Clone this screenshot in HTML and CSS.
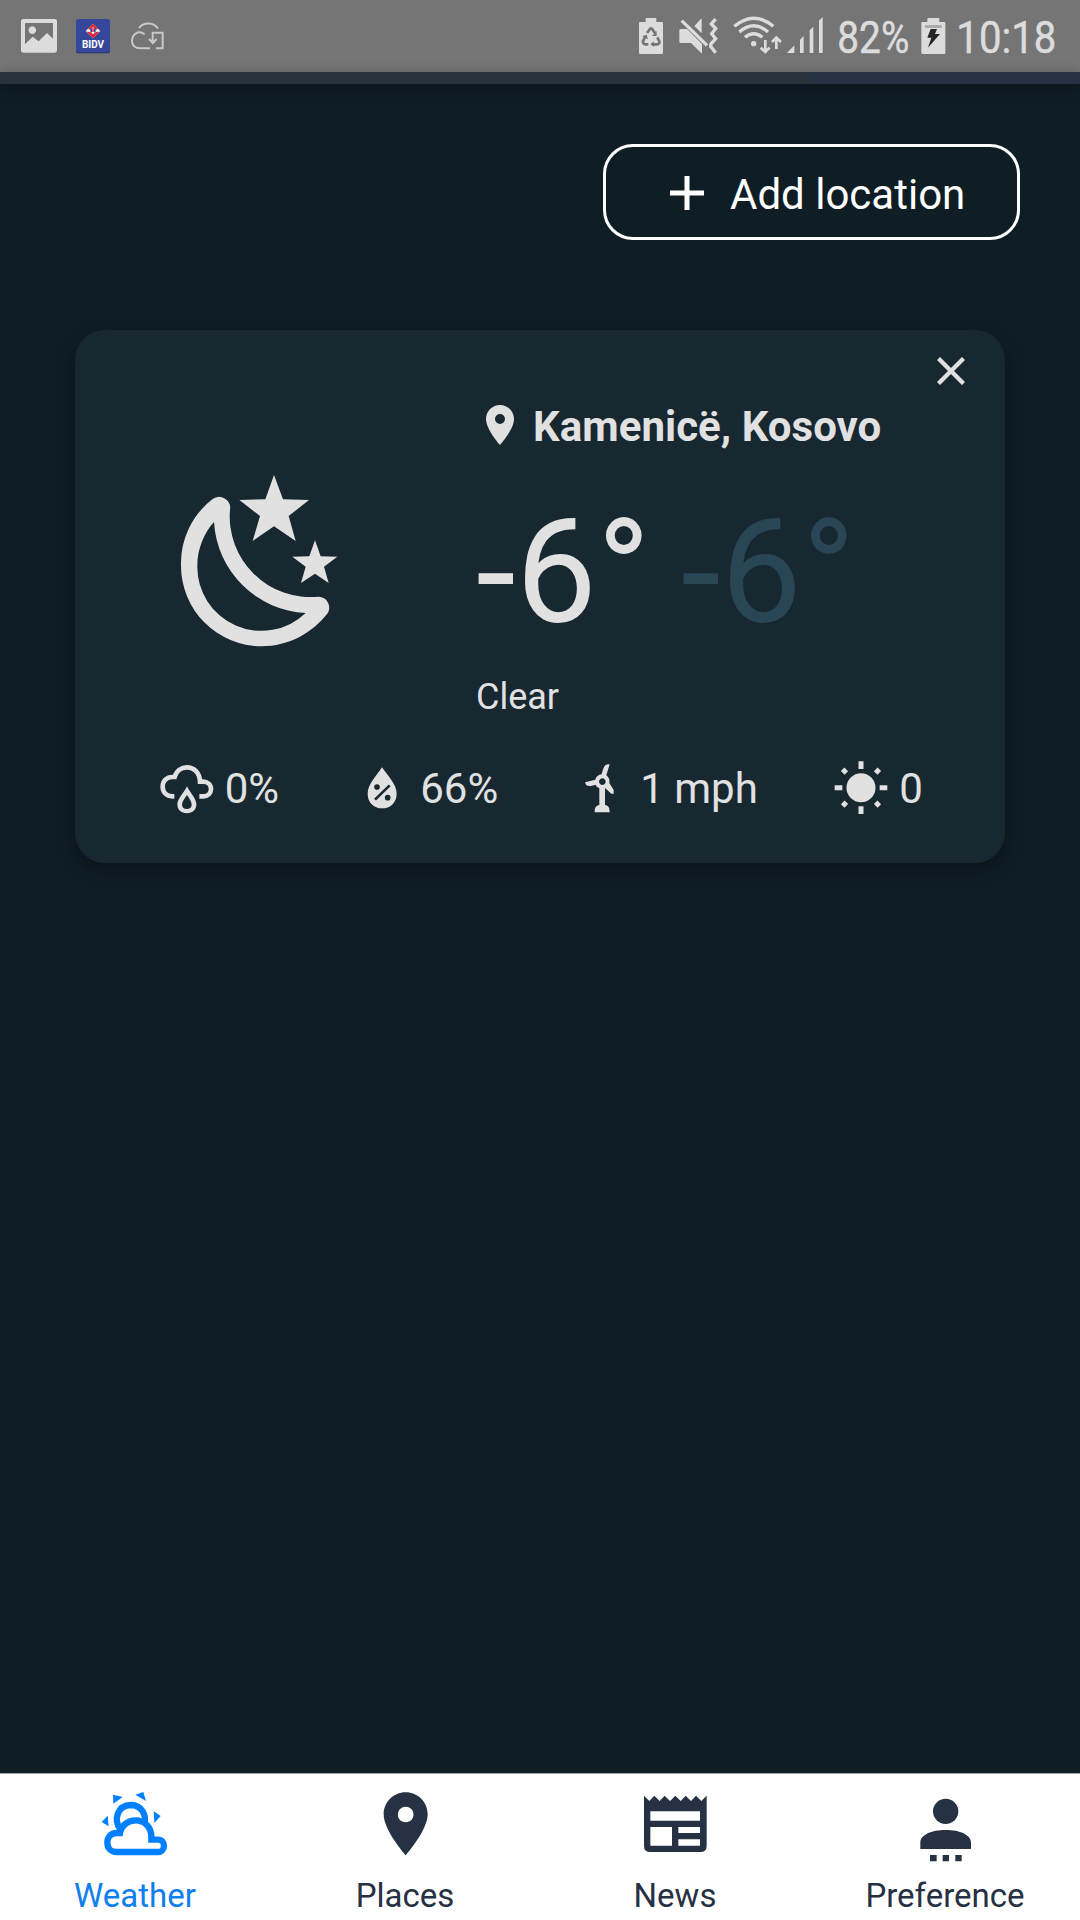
FILE: index.html
```html
<!DOCTYPE html>
<html lang="en">
<head>
<meta charset="utf-8">
<title>Weather</title>
<link rel="stylesheet" href="styles.css">
</head>
<body>
<header class="status">
  <div class="status-left">
    <svg class="st-image" viewBox="63 0 108 216"><path fill-rule="evenodd" d="M70 57H164Q171 57 171 64V151Q171 158 164 158H70Q63 158 63 151V64Q63 57 70 57ZM75 69V133L98 110L116 124L141 99L159 116V69ZM97 79A11.500 11.500 0 1 1 96.900 79Z"/></svg>
    <svg class="st-bidv" viewBox="228 0 102 216"><rect x="228" y="60" width="102" height="100" rx="8" fill="#26336f"/><rect x="228" y="57" width="102" height="100" rx="8" fill="#35479b"/><path d="M279 71L301 93L279 115L257 93Z" fill="#f4e9ee"/><path d="M260 95L270 96L279 103L288 96L298 95L279 115Z" fill="#e0202e"/><path d="M279 71L294 86L288 89L279 80L270 89L264 86Z" fill="#e0202e"/><path d="M271 87L276 84V98L271 95ZM287 87L282 84V98L287 95Z" fill="#35479b"/><rect x="277" y="83" width="4" height="13" fill="#e0202e"/><text class="bidv" x="279" y="145" textLength="66" lengthAdjust="spacingAndGlyphs">BIDV</text></svg>
    <svg class="st-cloud" viewBox="392 0 98 216"><path class="line" d="M416 84C430 66 460 66 473 86M433 103C415 89 395 102 395 123C396 138 406 145 420 145H449M457 128V98H487V145H467M446 117L457.500 129L469 117"/></svg>
  </div>
  <div class="status-right">
    <svg class="st-saver" viewBox="57 0 72 216"><path d="M77 66V57Q77 54 80 54H106Q109 54 109 57V66H126Q129 66 129 69V158Q129 162 125 162H61Q57 162 57 158V69Q57 66 60 66Z"/><path class="recycle" d="M81 99L90 87Q93 84 96 87L106 100M77 108L69 123Q67 131 75 133H85M112 112L118 124Q120 131 112 133H96"/><path class="recycle-tip" d="M110 93V108H96ZM102 124V141L91 133ZM67 109L80 104L84 118Z"/></svg>
    <svg class="st-mute" viewBox="176 0 116 216"><path d="M177 91Q177 87 181 87H200L245 132V160H243L212 129H181Q177 129 177 125ZM244 56V100L222 78L242 56Z"/><path class="slash" d="M184 62L260 136"/><path class="wave" d="M286 57L273 72L286 86L274 101L286 116L272 132L271 139L286 158"/></svg>
    <svg class="st-wifi" viewBox="338 0 146 216"><path class="arc" d="M342 79Q400 30 459 79M357 96Q400 59 443 96M374 112Q400 90 426 112"/><circle cx="400" cy="131" r="8"/><path class="arrow" d="M435 120V154M421 143L435 156L448 143M468 147V114M455 126L468 113L482 126"/></svg>
    <svg class="st-signal" viewBox="502 0 108 216"><path d="M502 159L524 136V159ZM541 119L552 108V159H541ZM570 91L581 80V159H570ZM598 62L609 51V159H598Z"/></svg>
    <svg class="st-pct" viewBox="657 0 206 216"><text x="652" y="158" textLength="216" lengthAdjust="spacingAndGlyphs">82%</text></svg>
    <svg class="st-charge" viewBox="902 0 74 216"><path d="M921 66V57Q921 54 924 54H954Q957 54 957 57V66H972Q975 66 975 69V158Q975 162 971 162H907Q903 162 903 158V69Q903 66 906 66Z"/><path fill="#aaa" d="M914 75H964V84H914Z"/><path fill="#262626" d="M931 87H950L944 102H959L923 143L933 113H921Z"/></svg>
    <svg class="st-time" viewBox="1018 0 285 216"><text x="1010" y="158" textLength="300" lengthAdjust="spacingAndGlyphs">10:18</text></svg>
  </div>
</header>
<div class="strip"><span class="strip-end"></span></div>

<main class="screen">
  <button class="add">
    <svg class="plus" viewBox="0 0 34 34"><path d="M17 0V34M0 17H34"/></svg>
    <span>Add location</span>
  </button>
  <article class="card">
    <div class="card-top">
      <svg class="close" viewBox="0 0 28 28"><path d="M1.500 1.500L26.500 26.500M26.500 1.500L1.500 26.500"/></svg>
    </div>
    <div class="now">
      <svg class="moon" viewBox="355 490 480 525"><path fill-rule="evenodd" d="M455 569A242 242 0 0 0 361 768A242 242 0 0 0 602 1010C685 1010 755 970 801 911A33 33 0 0 0 774 861A242 242 0 0 1 508 600A33 33 0 0 0 455 569ZM460 637A290 290 0 0 0 735 910A192 192 0 0 1 410 768C410 718 430 670 460 637Z"/><path d="M640 496L667 569L745 571L684 619L705 694L640 650L576 694L598 619L536 571L614 569ZM763 692L780 740L830 741L790 771L804 820L763 792L721 820L735 771L695 741L746 740Z"/></svg>
      <div class="details">
        <div class="place">
          <svg class="pin" viewBox="5 2 14 20"><path d="M12 2C8.130 2 5 5.130 5 9c0 5.250 7 13 7 13s7-7.750 7-13c0-3.870-3.130-7-7-7zm0 9.500a2.500 2.500 0 0 1 0-5 2.500 2.500 0 0 1 0 5z"/></svg>
          <span>Kamenicë, Kosovo</span>
        </div>
        <div class="temps"><span>-6°</span><span class="low">-6°</span></div>
        <div class="sky">Clear</div>
      </div>
    </div>
    <div class="stats">
      <div class="stat">
        <svg viewBox="89 62 162 162"><path class="cloud" d="M132 168H126C108 168 97 155 97 139C97 122 109 110 126 110H133C138 91 153 81 170 81C191 81 208 97 209 124H218C232 124 242 133 242 146C242 159 232 168 219 168H207"/><path fill-rule="evenodd" d="M170 138C181 160 198 175 198 192C198 208 187 219 170 219C152 219 141 208 141 192C141 176 159 160 170 138ZM170 164C163 175 155 183 155 193C155 201 161 206 170 206C178 206 184 201 184 193C184 183 177 175 170 164Z"/></svg>
        <span>0%</span>
      </div>
      <div class="stat">
        <svg viewBox="676 62 162 162"><path d="M757 81C775 107 801 132 801 160C801 187 782 204 757 204C732 204 714 186 714 160C714 132 740 108 757 81Z"/><g class="cut"><path d="M736 178L780 135"/><circle cx="742" cy="140" r="8.500"/><circle cx="774" cy="172" r="8.500"/></g></svg>
        <span>66%</span>
      </div>
      <div class="stat">
        <svg viewBox="46 62 162 162"><path fill-rule="evenodd" d="M126 102C130 87 133 72 146 72H150L140 105C147 110 151 118 149 128L162 149V160H155L136 143V194C146 195 150 202 150 216H105C105 202 109 195 119 194V143C113 141 109 137 108 133C94 137 81 140 78 131L76 126L107 118C109 109 116 103 126 102ZM128 114A10 10 0 1 0 128.100 114Z"/></svg>
        <span>1 mph</span>
      </div>
      <div class="stat">
        <svg viewBox="823 62 162 162"><circle cx="904" cy="142" r="43.500"/><path class="rays" d="M904 63V86M904 198V221M825 142H848M960 142H983M849 87L860 98M948 186L959 197M959 87L948 98M860 186L849 197"/></svg>
        <span>0</span>
      </div>
    </div>
  </article>
</main>

<nav class="tabs">
  <a class="tab active">
    <svg viewBox="171 78 228 228"><path d="M219 104L248 111L220 131ZM286 104L310 96L318 123ZM341 154L362 168L343 189ZM203 167L185 186L206 199Z"/><path class="outline" d="M242 210C218 177 234 136 272 135C306 136 319 164 314 192"/><path class="outline" d="M230 219H240C244 198 262 181 287 181C314 181 334 202 334 230V239H354C366 239 372 248 372 257C372 268 365 276 353 276H230C213 276 202 264 202 248C202 231 213 219 230 219Z"/></svg>
    <span>Weather</span>
  </a>
  <a class="tab">
    <svg viewBox="981 78 228 228"><path fill-rule="evenodd" d="M1097 97C1060 97 1031 127 1031 163C1031 212 1097 286 1097 286S1163 212 1163 163C1163 127 1134 97 1097 97ZM1097 187A23.500 23.500 0 1 1 1097.100 187Z"/></svg>
    <span>Places</span>
  </a>
  <a class="tab">
    <svg viewBox="111 78 228 228"><path fill-rule="evenodd" d="M132 107L148 123L163 107L179 123L194 107L210 123L226 107L242 123L257 107L273 123L288 107L304 123L320 107V257Q320 276 301 276H151Q132 276 132 257ZM151 154V182H300V154ZM151 201V257H216V201ZM235 201V219H300V201ZM235 238V257H300V238Z"/></svg>
    <span>News</span>
  </a>
  <a class="tab">
    <svg viewBox="921 78 228 228"><circle cx="1037" cy="154" r="38"/><path d="M961 267V248C961 224 995 210 1037 210C1079 210 1113 224 1113 248V267ZM990 285H1010V304H990ZM1028 285H1047V304H1028ZM1066 285H1085V304H1066Z"/></svg>
    <span>Preference</span>
  </a>
</nav>
</body>
</html>
```
FILE: styles.css
```css
* { box-sizing: border-box; }
body {
  margin: 0;
  width: 1080px;
  height: 1920px;
  display: flex;
  flex-direction: column;
  overflow: hidden;
  background: #0f1e25;
  font-family: Roboto, "Liberation Sans", sans-serif;
}
svg { display: block; flex: none; }

/* status bar */
.status {
  height: 72px;
  flex: none;
  display: flex;
  justify-content: space-between;
  padding: 0 25.67px 0 21px;
  background: #757575;
}
.status svg { height: 72px; fill: #dcdcdc; overflow: visible; }
.status text { font-size: 135px; fill: #dcdcdc; stroke: #dcdcdc; stroke-width: 1.5; }
.status .bidv { font-size: 31px; font-weight: 700; fill: #fff; stroke: none; text-anchor: middle; }
.status-left, .status-right { display: flex; }
.st-image { width: 36px; margin-right: 19px; }
.st-bidv { width: 34px; margin-right: 20.67px; }
.st-cloud { width: 32.67px; }
.status .line { fill: none; stroke: #c8c8c8; stroke-width: 6; }
.st-saver { width: 24px; margin-right: 15.67px; }
.recycle { fill: none; stroke: #757575; stroke-width: 8; }
.recycle-tip { fill: #757575; }
.st-mute { width: 38.67px; margin-right: 15.33px; }
.slash { fill: none; stroke: #dcdcdc; stroke-width: 10; }
.wave { fill: none; stroke: #dcdcdc; stroke-width: 10; }
.st-wifi { width: 48.67px; margin-right: 6px; }
.arc { fill: none; stroke: #dcdcdc; stroke-width: 10; }
.arrow { fill: none; stroke: #dcdcdc; stroke-width: 8; }
.st-signal { width: 36px; margin-right: 15.67px; }
.st-pct { width: 68.67px; margin-right: 13px; }
.st-charge { width: 24.67px; margin-right: 14px; }
.st-time { width: 95px; }

.strip {
  height: 12px;
  flex: none;
  display: flex;
  justify-content: flex-end;
  background: #273339;
  box-shadow: 0 3px 14px rgba(0, 0, 0, .3);
}
.strip-end { width: 270px; background: #263143; }

/* content */
.screen {
  flex: 1;
  display: flex;
  flex-direction: column;
  padding: 60px 75px 0;
}
.add {
  align-self: flex-end;
  width: 417px;
  height: 96px;
  margin-right: -15px;
  padding: 1px 0 0 63.5px;
  display: flex;
  align-items: center;
  gap: 26.5px;
  border: 3px solid #fff;
  border-radius: 30px;
  background: none;
  color: #fff;
  font: 400 42px/50px Roboto, "Liberation Sans", sans-serif;
}
.add span { padding-top: 4px; }
.plus { width: 34px; height: 34px; stroke: #fff; stroke-width: 5; }
.card {
  height: 533px;
  margin-top: 90px;
  border-radius: 30px;
  background: #172831;
  box-shadow: 0 6px 18px rgba(0, 0, 0, .36);
  color: #e1e1e1;
  fill: #e1e1e1;
}
.card-top {
  height: 72px;
  display: flex;
  justify-content: flex-end;
  padding: 27px 40px 0 0;
}
.close { width: 28px; height: 28px; stroke: #e1e1e1; stroke-width: 4.300; }
.now { display: grid; grid-template-columns: 401px 1fr; }
.moon { width: 160px; height: 175px; margin: 71.33px 0 0 103.67px; }
.place {
  height: 50px;
  display: flex;
  align-items: center;
  gap: 19px;
  padding-left: 10px;
  font-weight: 700;
  font-size: 42px;
  line-height: 50px;
  letter-spacing: .04px;
}
.pin { width: 28px; height: 40px; margin-top: -4px; }
.temps {
  display: flex;
  margin-top: 37px;
  font-size: 144px;
  line-height: 168px;
}
.temps span { width: 205px; }
.temps .low { color: #294656; }
.sky { margin-top: 19px; font-size: 36px; line-height: 42px; }
.stats {
  display: grid;
  grid-template-columns: 195.6px 220px 259px auto;
  margin-top: 43px;
  padding-left: 84.67px;
  font-size: 42px;
  line-height: 54px;
}
.stat { display: flex; gap: 11px; }
.stat svg { width: 54px; height: 54px; }
.stat span { padding-top: 1px; }
.cloud { fill: none; stroke: #e1e1e1; stroke-width: 14; }
.cut { fill: #172831; stroke: #172831; }
.cut path { stroke-width: 8; }
.cut circle { stroke: none; }
.rays { stroke: #e1e1e1; stroke-width: 15; }

/* bottom tabs */
.tabs {
  height: 147px;
  flex: none;
  display: grid;
  grid-template-columns: repeat(4, 1fr);
  border-top: 1px solid #9ba3a8;
  background: #fff;
}
.tab {
  display: flex;
  flex-direction: column;
  align-items: center;
  gap: 14px;
  padding-top: 12px;
  color: #263143;
  fill: #263143;
  font-size: 33px;
  line-height: 40px;
}
.tab svg { width: 76px; height: 76px; }
.active { color: #0f7eee; fill: #0080ff; }
.outline { fill: none; stroke: #0080ff; stroke-width: 19; }
```
